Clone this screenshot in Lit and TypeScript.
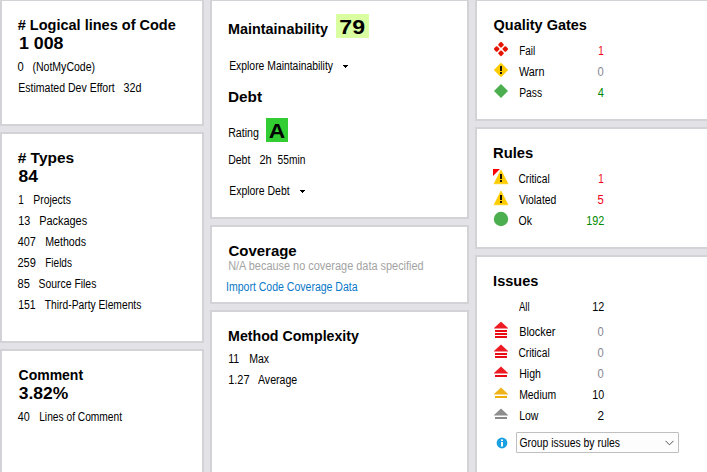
import { LitElement, html, css, svg, nothing } from "lit";
import { customElement, property } from "lit/decorators.js";
import { styleMap } from "lit/directives/style-map.js";

const FAMILY = '"Liberation Sans", Arial, sans-serif';
const OVERSAMPLE = 20;
const ctx = document.createElement("canvas").getContext("2d")!;

/** One run of text condensed so that its ink spans exactly its box. */
@customElement("fit-text")
class FitText extends LitElement {
  @property() text = "";
  @property() weight = "normal";
  @property({ type: Number }) size = 12;
  @property({ type: Number }) gap = 0;
  @property({ type: Number }) w = 0;
  static styles = css`
    :host { display: block; flex: none; }
    .box { display: block; }
    .run { display: inline-block; white-space: pre; transform-origin: 0 0; }
  `;
  render() {
    ctx.font = `${this.weight} ${this.size * OVERSAMPLE}px ${FAMILY}`;
    const m = ctx.measureText(this.text);
    const left = m.actualBoundingBoxLeft / OVERSAMPLE;
    const ink = left + m.actualBoundingBoxRight / OVERSAMPLE;
    const k = this.w / ink;
    const dx = left * k;
    return html`<span class="box" style=${styleMap({ width: `${this.w}px`, marginLeft: `${this.gap}px` })}><span class="run" style=${styleMap({ transform: `translateX(${dx}px) scaleX(${k})` })}>${this.text}</span></span>`;
  }
}

type Run = [string, number, number];
const FONTS: Record<string, [string, number]> = { title: ["bold", 14.5], value: ["bold", 17], body: ["normal", 12], score: ["bold", 20] };

const runs = (kind: string, origin: number, list: Run[]) => {
  let at = origin;
  return list.map(([text, from, to]) => {
    const gap = from - at;
    at = to;
    const [weight, size] = FONTS[kind];
    return html`<fit-text .text=${text} .weight=${weight} .size=${size} .gap=${gap} .w=${to - from}></fit-text>`;
  });
};

const stack = (color: string, bar: string, top: number, bars: number[]) => svg`
  <path d="M8 ${top - 0.4}L15 ${top + 6}V${top + 6.5}H1V${top + 6}Z" fill=${color}/>
  ${bars.map((y) => svg`<rect x="2" y=${y} width="12" height="2" fill=${bar}/>`)}`;

const triangle = svg`<path d="M8 1L15 14.8H1Z" fill="#fc0" stroke="#fc0" stroke-width=".6" stroke-linejoin="round"/><path d="M7 5h2v5h-2zM7 11h2v2h-2z" fill="#1a1300"/>`;
const petal = (x: number, y: number) => svg`<rect x=${x - 2.3} y=${y - 2.3} width="4.6" height="4.6" rx="1.1" transform="rotate(45 ${x} ${y})" fill="#e51400"/>`;

const ICONS: Record<string, unknown> = {
  fail: svg`${petal(8, 3.7)}${petal(8, 12.3)}${petal(3.7, 8)}${petal(12.3, 8)}`,
  warn: svg`<path d="M8 .8L15.2 8 8 15.2.8 8Z" fill="#fc0"/><path d="M7 4h2v5h-2zM7 10h2v2h-2z" fill="#1a1300"/>`,
  pass: svg`<path d="M8 1L15 8 8 15 1 8Z" fill="#4bae4f"/>`,
  critical: svg`${triangle}<path d="M0 0H7L0 7Z" fill="#f00"/>`,
  violated: triangle,
  ok: svg`<circle cx="8" cy="8" r="7.2" fill="#4bae4f"/>`,
  blocker: stack("#ed1c24", "#e80c14", 0, [8, 11, 14]),
  severe: stack("#ed1c24", "#e80c14", 2, [10, 13]),
  high: stack("#ed1c24", "#e80c14", 3, [11]),
  medium: stack("#efb41c", "#efae08", 3, [11]),
  low: stack("#8e8e8e", "#8a8a8a", 3, [11]),
};

const stat = (icon: string, label: Run, count: Run, tone: string, cls = "") => html`
  <div class="line body ${cls}">
    <svg class="icon" viewBox="0 0 16 16">${ICONS[icon] ?? nothing}</svg>
    ${runs("body", 509, [label])}
    <div class="${tone}">${runs("body", label[2], [count])}</div>
  </div>`;

const title = (origin: number, r: Run) => html`<div class="line title">${runs("title", origin, [r])}</div>`;
const value = (r: Run) => html`<div class="line value">${runs("value", 18, [r])}</div>`;
const body = (cls: string, origin: number, ...r: Run[]) => html`<div class="line body ${cls}">${runs("body", origin, r)}</div>`;
const caret = html`<svg class="caret" viewBox="0 0 5 3"><path d="M0 0H5V1H4V2H3V3H2V2H1V1H0Z"/></svg>`;

@customElement("app-root")
class AppRoot extends LitElement {
  static styles = css`
    :host {
      display: block; width: 707px; height: 472px; overflow: hidden;
      background: #e3e2e7; color: #000; font: 12px "Liberation Sans", Arial, sans-serif;
    }
    .board { display: grid; grid-template-columns: 204px 259px 240px; column-gap: 6px; height: 480px; margin-top: -1px; }
    .col { display: flex; flex-direction: column; gap: 6px; }
    .card { box-sizing: border-box; flex: none; background: #fff; border: 2px solid #d3d2d7; padding: 16px 0 0 16px; }
    .grow { flex: 1; }
    .h127 { height: 127px; } .h211 { height: 211px; } .h220 { height: 220px; }
    .h79 { height: 79px; } .h122 { height: 122px; }
    .tall { padding-top: 13px; }
    .line { display: flex; }
    .title { height: 16px; font: bold 14.5px/16px "Liberation Sans", Arial, sans-serif; }
    .value { height: 19px; margin-top: 1px; font: bold 17px/19px "Liberation Sans", Arial, sans-serif; }
    .body { height: 16px; line-height: 16px; margin-top: 5px; }
    .m6 { margin-top: 6px; } .m7 { margin-top: 7px; } .m10 { margin-top: 10px; }
    .m15 { margin-top: 15px; } .m20 { margin-top: 20px; } .m9 { margin-top: 9px; } .tight { margin-top: -1px; }
    .scored { display: flex; height: 24px; }
    .scored .line { margin-top: 7px; }
    .rating { margin-top: 13px; }
    .second { margin-top: 15px; }
    .badge { height: 24px; font: bold 20px/24px "Liberation Sans", Arial, sans-serif; }
    .b79 { width: 33px; margin-left: 8px; background: #d9ffa0; }
    .b79 fit-text, .ba fit-text { margin-top: 1px; }
    .ba { width: 22px; margin-left: 8px; background: #32cd32; }
    .caret { width: 5px; height: 3px; margin: 7px 0 0 10.5px; }
    .na { color: #a3a3a3; }
    .link { color: #0a78c8; margin-left: -2px; }
    .icon { width: 16px; height: 16px; margin-top: -2px; flex: none; }
    .red { color: #f00014; } .gray { color: #858590; } .green { color: #008a00; } .black { color: #000; }
    .pick { display: flex; margin: 8px 0 0 1px; }
    .info { width: 12px; height: 12px; margin: 5px 8px 0 2px; }
    .select {
      box-sizing: border-box; display: flex; justify-content: space-between; width: 163px; height: 21px;
      border: 1px solid #bfbfbf; border-radius: 1px; background: #fdfdfd; padding: 2px 4px 0 2px; line-height: 16px;
    }
    .chev { width: 9px; height: 6px; margin: 5px 0 0; }
  `;
  render() {
    return html`<div class="board">
      <div class="col">
        <section class="card h127">
          ${title(18, ["# Logical lines of Code", 18.3, 175.7])}
          ${value(["1 008", 20, 63])}
          ${body("m6", 18, ["0", 18.3, 23.7], ["(NotMyCode)", 33.3, 94.8])}
          ${body("", 18, ["Estimated Dev Effort", 18.7, 114.3], ["32d", 124.3, 141.2])}
        </section>
        <section class="card h211">
          ${title(18, ["# Types", 18.3, 73.7])}
          ${value(["84", 18.7, 37.7])}
          ${body("m6", 18, ["1", 19, 23.3], ["Projects", 33.7, 70.3])}
          ${body("", 18, ["13", 19, 29.7], ["Packages", 39.7, 86.5])}
          ${body("", 18, ["407", 18.3, 35.7], ["Methods", 45.7, 85.3])}
          ${body("", 18, ["259", 18.3, 35.7], ["Fields", 45.7, 71.3])}
          ${body("", 18, ["85", 18.3, 29.7], ["Source Files", 39.3, 96.3])}
          ${body("", 18, ["151", 19, 35.2], ["Third-Party Elements", 45.3, 141.3])}
        </section>
        <section class="card grow">
          ${title(18, ["Comment", 18.7, 82.7])}
          ${value(["3.82%", 18.7, 67.7])}
          ${body("m6", 18, ["40", 18.3, 29.7], ["Lines of Comment", 39.7, 121.7])}
        </section>
      </div>
      <div class="col">
        <section class="card h220 tall">
          <div class="scored">
            ${title(228, ["Maintainability", 229, 328])}
            <div class="badge b79">${runs("score", 336, [["79", 340.3, 364.7]])}</div>
          </div>
          <div class="line body m20">${runs("body", 228, [["Explore Maintainability", 229.7, 332.7]])}${caret}</div>
          <div class="second">${title(228, ["Debt", 229, 262])}</div>
          <div class="scored rating">
            ${body("", 228, ["Rating", 228.7, 258])}
            <div class="badge ba">${runs("score", 266, [["A", 269, 284.7]])}</div>
          </div>
          ${body("m10", 228, ["Debt", 228.7, 250], ["2h", 260, 271], ["55min", 278.3, 305])}
          <div class="line body m15">${runs("body", 228, [["Explore Debt", 229.7, 289.3]])}${caret}</div>
        </section>
        <section class="card h79">
          ${title(228, ["Coverage", 228.7, 296])}
          ${body("tight na", 228, ["N/A because no coverage data specified", 228.7, 423.3])}
          ${body("link", 226, ["Import Code Coverage Data", 226.7, 357.3])}
        </section>
        <section class="card grow">
          ${title(228, ["Method Complexity", 229, 359])}
          ${body("m7", 228, ["11", 229, 238.7], ["Max", 249.7, 268.7])}
          ${body("", 228, ["1.27", 229, 249], ["Average", 258.3, 297])}
        </section>
      </div>
      <div class="col">
        <section class="card h122">
          ${title(493, ["Quality Gates", 493.7, 586])}
          ${stat("fail", ["Fail", 519.5, 534], ["1", 598.7, 603], "red", "m10")}
          ${stat("warn", ["Warn", 519.3, 544], ["0", 598.3, 603.7], "gray")}
          ${stat("pass", ["Pass", 519.5, 541.3], ["4", 598, 603.7], "green")}
        </section>
        <section class="card h122">
          ${title(493, ["Rules", 494, 532.7])}
          ${stat("critical", ["Critical", 519, 549], ["1", 598.7, 603], "red", "m10")}
          ${stat("violated", ["Violated", 519.3, 556], ["5", 598.3, 603.7], "red")}
          ${stat("ok", ["Ok", 519, 532], ["192", 587, 603.7], "green")}
        </section>
        <section class="card grow">
          ${title(493, ["Issues", 494, 537.7])}
          ${stat("", ["All", 519.3, 529.3], ["12", 593, 603.7], "black", "m10")}
          ${stat("blocker", ["Blocker", 519.5, 554.7], ["0", 598.3, 603.7], "gray", "m9")}
          ${stat("severe", ["Critical", 519, 549], ["0", 598.3, 603.7], "gray")}
          ${stat("high", ["High", 519.5, 539.7], ["0", 598.3, 603.7], "gray")}
          ${stat("medium", ["Medium", 519.5, 555], ["10", 593, 603.7], "black")}
          ${stat("low", ["Low", 519.5, 538], ["2", 598.3, 603.7], "black")}
          <div class="pick">
            <svg class="info" viewBox="0 0 12 12"><circle cx="6" cy="6" r="5.4" fill="#1ba1e2"/><path d="M5 2.5h2v1.5h-2zM5 5h2v4.5h-2z" fill="#fff"/></svg>
            <div class="select">
              ${runs("body", 519, [["Group issues by rules", 519.7, 619.3]])}
              <svg class="chev" viewBox="0 0 9 6"><path d="M.5 .8L4.5 4.8 8.5 .8" fill="none" stroke="#555"/></svg>
            </div>
          </div>
        </section>
      </div>
    </div>`;
  }
}
